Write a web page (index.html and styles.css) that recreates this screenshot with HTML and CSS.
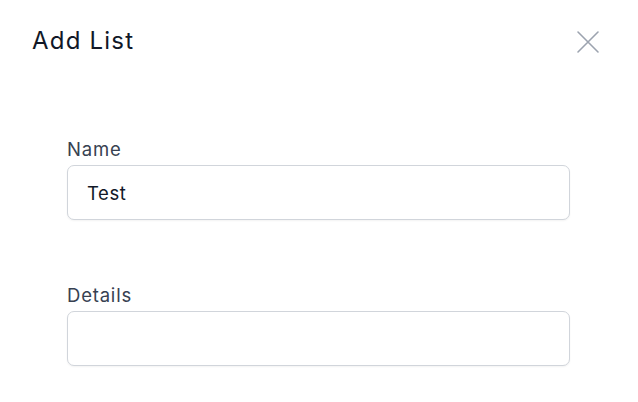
FILE: index.html
```html
<!DOCTYPE html>
<html>
<head>
<meta charset="utf-8">
<link rel="stylesheet" href="styles.css">
</head>
<body>
<div class="dialog">
  <div class="header">
    <h1 class="title">Add List</h1>
    <button class="close" aria-label="Close">
      <svg width="24" height="24" viewBox="0 0 24 24" fill="none" stroke="currentColor" stroke-width="1.6" stroke-linecap="round"><path d="M2 2L22 22M22 2L2 22"/></svg>
    </button>
  </div>
  <form class="form">
    <div class="field">
      <label class="label">Name</label>
      <input class="input" type="text" value="Test">
    </div>
    <div class="field">
      <label class="label">Details</label>
      <input class="input" type="text" value="">
    </div>
  </form>
</div>
</body>
</html>
```

FILE: styles.css
```css
html, body {
  margin: 0;
  padding: 0;
  background: #ffffff;
}
body {
  font-family: Inter, "Noto Sans", sans-serif;
  color: #111827;
}
.dialog {
  width: 638px;
  height: 402px;
  overflow: hidden;
  box-sizing: border-box;
}
.header {
  display: flex;
  justify-content: space-between;
  align-items: flex-start;
  padding: 25px 38px 0 32px;
}
.title {
  margin: 0;
  font-size: 24px;
  line-height: 32px;
  font-weight: 400;
  letter-spacing: 1.2px;
  color: #111827;
}
.close {
  margin-top: 5px;
  padding: 0;
  border: 0;
  background: none;
  color: #9ca3af;
  width: 24px;
  height: 24px;
  display: flex;
}
.form {
  display: flex;
  flex-direction: column;
  gap: 63px;
  padding: 80px 68px 0 67px;
}
.field {
  display: flex;
  flex-direction: column;
  gap: 4px;
}
.label {
  font-size: 18.5px;
  line-height: 24px;
  letter-spacing: 0.8px;
  color: #374151;
}
.input {
  box-sizing: border-box;
  height: 55px;
  width: 100%;
  border: 1px solid #d1d5db;
  border-radius: 7px;
  padding: 0 19px;
  font-family: Inter, "Noto Sans", sans-serif;
  font-size: 18.5px;
  letter-spacing: 0.6px;
  color: #111827;
  background: #fff;
  box-shadow: 0 1px 2px rgba(0,0,0,0.05);
  outline: none;
}
```
